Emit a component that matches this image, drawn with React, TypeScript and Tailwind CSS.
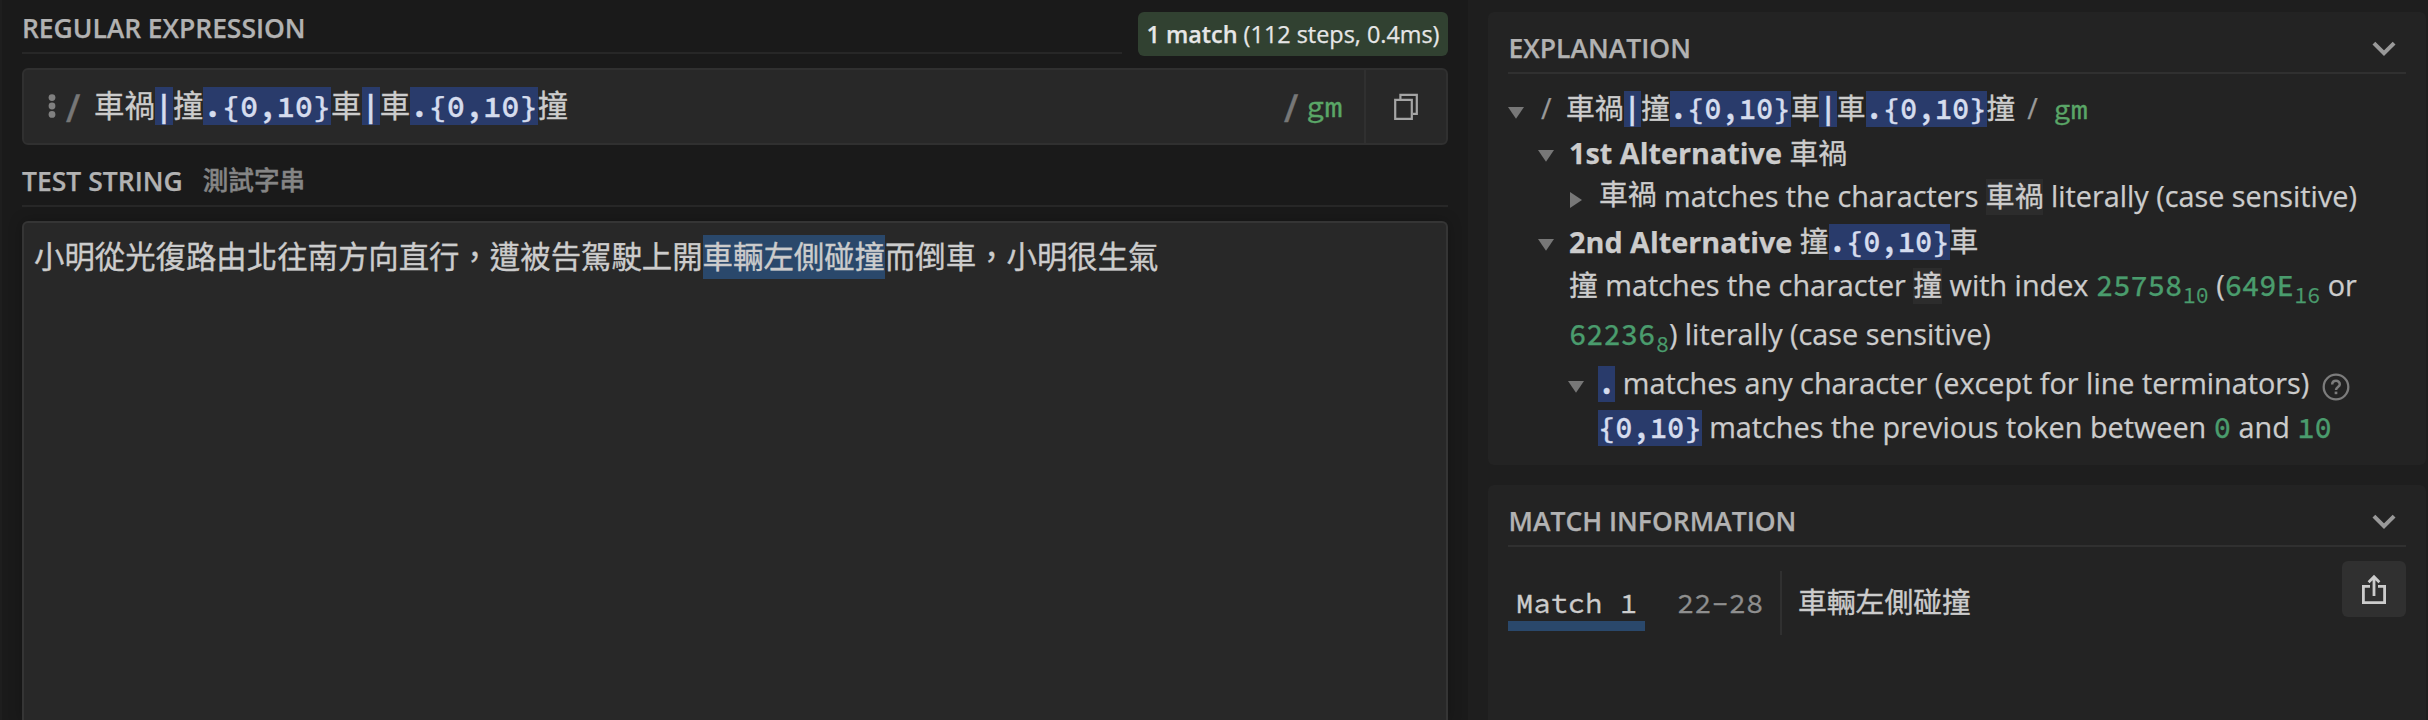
import type { ReactNode } from "react";

function Token({ children }: { children: ReactNode }) {
  return (
    <span className="bg-[#293b6b] font-semibold text-[#d5dcee] [-webkit-text-stroke:0.3px_currentColor]">{children}</span>
  );
}

function Code({ children }: { children: ReactNode }) {
  return (
    <span className="font-['Source_Code_Pro','Noto_Sans_CJK_TC',monospace] text-[28.8px] leading-[36px] [-webkit-text-stroke:0.35px_currentColor]">
      {children}
    </span>
  );
}

function Num({ children, sub }: { children: ReactNode; sub?: string }) {
  return (
    <span className="font-['Source_Code_Pro','Liberation_Mono',monospace] leading-[36px] text-[#4a9c6d]">
      <span className="font-medium">{children}</span>
      {sub && <span className="relative top-[7px] ml-[0.5px] text-[21.6px] leading-none">{sub}</span>}
    </span>
  );
}

function Pattern() {
  return (
    <>
      車禍<Token>|</Token>撞<Token>{".{0,10}"}</Token>車<Token>|</Token>車<Token>{".{0,10}"}</Token>撞
    </>
  );
}

function Title({ children, extra, className }: { children: ReactNode; extra?: ReactNode; className: string }) {
  return (
    <div className={`flex items-end border-b-2 pb-[6px] text-[26.5px] leading-[36px] font-semibold text-[#b2b2b2] [-webkit-text-stroke:0.25px_currentColor] ${className}`}>
      <span>{children}</span>
      {extra}
    </div>
  );
}

function Chevron() {
  return (
    <svg width="24" height="16" viewBox="0 0 24 16" className="mr-[10px] mb-[9px] ml-auto" fill="none" stroke="#999" strokeWidth="4">
      <path d="M1.9 2.2 12 12.2 22.1 2.2" />
    </svg>
  );
}

function Down({ className }: { className: string }) {
  return (
    <svg width="16" height="12" viewBox="0 0 16 12" className={`shrink-0 ${className}`} fill="#777">
      <path d="M0 0H16L8 11.7Z" />
    </svg>
  );
}

function Explanation() {
  return (
    <section className="h-[453px] rounded-[6px] bg-[#232323] px-5">
      <Title className="h-[62px] border-[#303030] pl-[0.5px]" extra={<Chevron />}>EXPLANATION</Title>
      <div className="pt-3 text-[28.8px] leading-[43px] whitespace-nowrap text-[#cccccc] [-webkit-text-stroke:0.25px_currentColor]">
        <div className="flex h-[45px]">
          <Down className="mt-[21px] mr-[17px]" />
          <span className="w-[25px] text-[#999]">/</span>
          <span><Code><Pattern /></Code></span>
          <span className="ml-[12px] w-[26px] text-[#999]">/</span>
          <span className="text-[#5aa667]"><Code>gm</Code></span>
        </div>
        <div className="flex h-[43px] pl-[30px]">
          <Down className="mt-[19px] mr-[15px]" />
          <span><b className="font-bold">1st Alternative</b> <Code>車禍</Code></span>
        </div>
        <div className="flex h-[46px] pl-[62px]">
          <svg width="12" height="16" viewBox="0 0 12 16" className="mt-[18px] mr-[17px]" fill="#777">
            <path d="M0 0V16L12 8Z" />
          </svg>
          <span>
            <span className="relative -top-[2px]"><Code>車禍</Code></span> matches the characters{" "}
            <Code><span className="bg-[#2c2c2c]">車禍</span></Code> literally (case sensitive)
          </span>
        </div>
        <div className="flex h-[43px] pl-[30px]">
          <Down className="mt-[19px] mr-[15px]" />
          <span>
            <b className="font-bold">2nd Alternative</b>{" "}
            <span className="relative -top-[1px]"><Code>撞<Token>{".{0,10}"}</Token>車</Code></span>
          </span>
        </div>
        <div className="h-[49px] pl-[61px]">
          <Code>撞</Code> matches the character <Code><span className="bg-[#2c2c2c]">撞</span></Code> with index{" "}
          <Num sub="10">25758</Num> (<Num sub="16">649E</Num> or
        </div>
        <div className="h-[49px] pl-[61px]">
          <Num sub="8">62236</Num>) literally (case sensitive)
        </div>
        <div className="flex h-[44px] pl-[60px]">
          <Down className="mt-[20px] mr-[14px]" />
          <span><Code><Token>.</Token></Code> matches any character (except for line terminators)</span>
          <svg width="28" height="28" viewBox="0 0 28 28" className="mt-[12px] ml-[13px]" fill="none" stroke="#7c7c7c">
            <circle cx="14" cy="14" r="12.3" strokeWidth="2.3" />
            <path d="M10.2 11.6C10.2 6.6 17.8 6.6 17.8 11.3C17.8 14 14 14 14 17" strokeWidth="2.5" />
            <path d="M14 18.6V21.2" strokeWidth="2.7" />
          </svg>
        </div>
        <div className="h-[44px] pl-[90px]">
          <Code><Token>{"{0,10}"}</Token></Code> matches the previous token between <Num>0</Num> and <Num>10</Num>
        </div>
      </div>
    </section>
  );
}

function MatchInformation() {
  return (
    <section className="h-[235px] rounded-t-[6px] bg-[#232323] px-5">
      <Title className="h-[62px] border-[#303030] pl-[0.5px]" extra={<Chevron />}>MATCH INFORMATION</Title>
      <div className="flex pt-[14px] font-['Source_Code_Pro','Noto_Sans_CJK_TC',monospace] text-[28.8px] leading-[36px] text-[#cccccc] [-webkit-text-stroke:0.35px_currentColor]">
        <div className="mt-[24px] h-[46px] w-[137px] border-b-10 border-[#2a486b] pl-2">Match 1</div>
        <div className="mt-[24px] ml-8 w-[103px] text-[#8f8f8f]">22-28</div>
        <div className="mt-[10px] h-[64px] border-l-2 border-[#303030] pt-[14px] pl-4">車輛左側碰撞</div>
        <button className="ml-auto flex h-[56px] w-[64px] items-center justify-center rounded-[6px] bg-[#303030]">
          <svg width="24" height="32" viewBox="0 0 24 32" fill="none" stroke="#cccccc" strokeWidth="2.8">
            <path d="M8 13.4H1.4V29.6H22.6V13.4H16" />
            <path d="M12 23V4.5M6.6 9.2 12 3.8 17.4 9.2" />
          </svg>
        </button>
      </div>
    </section>
  );
}

export default function App() {
  return (
    <div lang="zh-Hant" className="flex h-[720px] w-[2428px] overflow-hidden bg-[#1e1e1e] pl-[2px] font-['Open_Sans','Noto_Sans_CJK_TC',sans-serif]">
      <main className="flex w-[1466px] flex-col bg-[#1a1a1a] px-5">
        <div className="flex gap-4">
          <Title className="h-[54px] flex-1 border-[#272727] tracking-[-0.06px]">REGULAR EXPRESSION</Title>
          <div className="mt-3 flex h-[44px] w-[310px] items-center justify-center rounded-[6px] bg-[#314131] text-[23.4px] leading-[44px] whitespace-pre text-[#e6e6e6] [-webkit-text-stroke:0.25px_currentColor]">
            <b className="font-semibold">1 match</b> (112 steps, 0.4ms)
          </div>
        </div>
        <div className="mt-[12px] flex h-[77px] rounded-[6px] border-2 border-[#303030] bg-[#282828] font-['Source_Code_Pro','Noto_Sans_CJK_TC',monospace] text-[30.4px] leading-[38px] text-[#cccccc] [-webkit-text-stroke:0.35px_currentColor]">
          <div className="flex flex-1 pt-[17px] pl-[24px]">
            <svg width="8" height="26" viewBox="0 0 8 26" className="mt-[6px] mr-[8px]" fill="#808080">
              <circle cx="4" cy="4.6" r="3.4" />
              <circle cx="4" cy="13" r="3.4" />
              <circle cx="4" cy="21.4" r="3.4" />
            </svg>
            <span className="w-[30px] font-bold text-[#777]">/</span>
            <span><Pattern /></span>
            <span className="ml-auto w-[24px] font-bold text-[#777]">/</span>
            <span className="w-[58px] text-[#5aa667]">gm</span>
          </div>
          <button className="flex w-[82px] items-center border-l-2 border-[#303030] pl-[28px]">
            <svg width="24" height="28" viewBox="0 0 24 28" fill="none" stroke="#a5a5a5" strokeWidth="2.2">
              <path d="M6.4 6V1.8H22.8V20.8H19" />
              <path d="M1.2 6.9H17.8V25.8H1.2Z" />
            </svg>
          </button>
        </div>
        <Title
          className="h-[62px] border-[#272727]"
          extra={<span className="ml-[20px] text-[25.6px] font-medium text-[#858585] [-webkit-text-stroke:0.4px_currentColor]">測試字串</span>}
        >
          TEST STRING
        </Title>
        <div className="mt-[14px] flex-1 rounded-t-[6px] border-2 border-b-0 border-[#353535] bg-[#282828] pt-[15px] pl-[10px] font-['Source_Code_Pro','Noto_Sans_CJK_TC',monospace] text-[30.4px] leading-[38px] text-[#cccccc] shadow-[0_0_14px_rgba(0,0,0,0.25)] [-webkit-text-stroke:0.35px_currentColor]">
          小明從光復路由北往南方向直行，遭被告駕駛上開
          <span className="bg-[#2a486b] py-[3px]">車輛左側碰撞</span>
          而倒車，小明很生氣
        </div>
      </main>
      <aside className="flex w-[958px] flex-col gap-5 pt-3 pl-5">
        <Explanation />
        <MatchInformation />
      </aside>
    </div>
  );
}
